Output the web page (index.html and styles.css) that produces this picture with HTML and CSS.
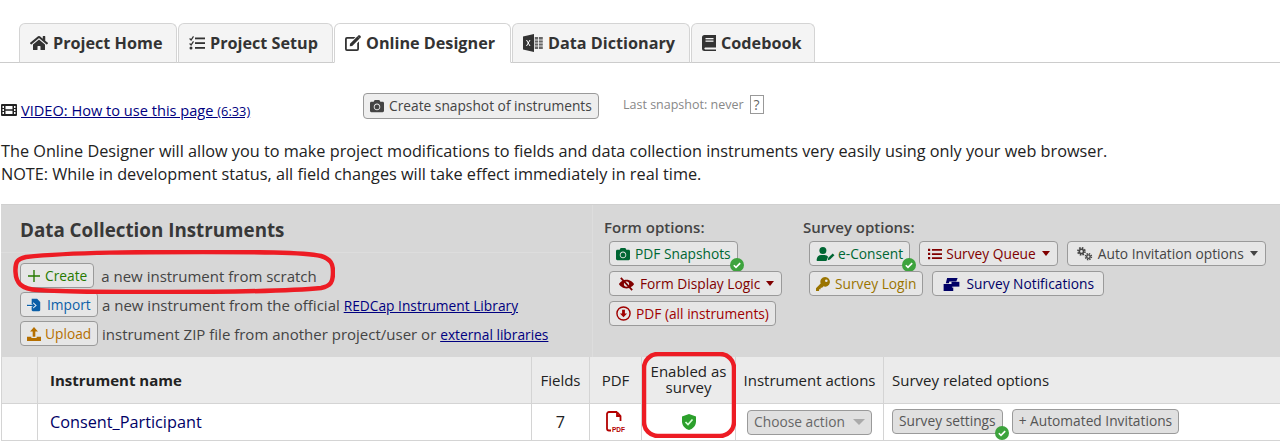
FILE: index.html
```html
<!DOCTYPE html>
<html lang="en">
<head>
<meta charset="utf-8">
<title>Online Designer</title>
<link rel="stylesheet" href="styles.css">
</head>
<body>
<nav class="tabs">
  <a class="tab t1"><svg class="ti" viewBox="0 0 576 512"><path d="M280.37 148.26L96 300.11V464a16 16 0 0 0 16 16l112.06-.29a16 16 0 0 0 15.92-16V368a16 16 0 0 1 16-16h64a16 16 0 0 1 16 16v95.64a16 16 0 0 0 16 16.05L464 480a16 16 0 0 0 16-16V300L295.67 148.26a12.19 12.19 0 0 0-15.3 0zM571.6 251.47L488 182.56V44.05a12 12 0 0 0-12-12h-56a12 12 0 0 0-12 12v72.61L318.47 43a48 48 0 0 0-61 0L4.34 251.47a12 12 0 0 0-1.6 16.9l25.5 31A12 12 0 0 0 45.15 301l235.22-193.74a12.19 12.19 0 0 1 15.3 0L530.9 301a12 12 0 0 0 16.9-1.6l25.5-31a12 12 0 0 0-1.7-16.93z"/></svg>Project Home</a>
  <a class="tab t2"><svg class="ti" viewBox="0 0 16 16"><path d="M1 3l1 1 2-3 1 .7L2.2 6 .2 4zM1 8l1 1 2-3 1 .7L2.2 11 .2 9z"/><rect x="6" y="2.500" width="10" height="1.800"/><rect x="6" y="7.200" width="10" height="1.800"/><rect x="6" y="12" width="10" height="1.800"/><circle cx="2" cy="13" r="1.500"/></svg>Project Setup</a>
  <a class="tab active t3"><svg class="ti" viewBox="0 0 16 16"><path d="M2 2h8.500L8.700 3.800H2.300a.5.5 0 0 0-.5.5V13.700a.5.5 0 0 0 .5.5H11.700a.5.5 0 0 0 .5-.5V8.300L14 6.500V14a2 2 0 0 1-2 2H2a2 2 0 0 1-2-2V4a2 2 0 0 1 2-2z"/><path d="M5 8.800L12.500 1.300 14.700 3.500 7.200 11 4.800 11.300z"/><path d="M13.200.6c.6-.6 1.300-.6 1.800 0l.5.5c.5.5.5 1.200 0 1.700l-.7.7L12.600 1.300z"/></svg>Online Designer</a>
  <a class="tab t4"><svg class="ti xl" viewBox="0 0 20 18"><path d="M0 2.500L11 0V18L0 15.500z"/><rect x="11.800" y="3" width="8" height="12" fill="#666"/><path d="M12 6h8M12 9h8M12 12h8M15.500 3v12" stroke="#fff" stroke-width=".8"/><path d="M3.500 6l3.500 6M7 6l-3.500 6" stroke="#fff" stroke-width="1"/></svg>Data Dictionary</a>
  <a class="tab t5"><svg class="ti bk" viewBox="0 0 14 16"><path d="M2.500 0H14V12.500H3A1.200 1.200 0 0 0 3 14.500H14V16H2.500A2.500 2.500 0 0 1 0 13.500V2.500A2.500 2.500 0 0 1 2.500 0z"/><rect x="3.500" y="3" width="8" height="1.300" fill="#f3f3f3"/><rect x="3.500" y="5.500" width="8" height="1.300" fill="#f3f3f3"/></svg>Codebook</a>
</nav>

<div class="toprow">
  <a class="video"><svg class="film" viewBox="0 0 16 14"><path fill-rule="evenodd" d="M1 1h14a1 1 0 0 1 1 1v10a1 1 0 0 1-1 1H1a1 1 0 0 1-1-1V2a1 1 0 0 1 1-1zM1.500 3v2h1.500V3zM1.500 6v2h1.500V6zM1.500 9v2h1.500V9zM13 3v2h1.500V3zM13 6v2h1.500V6zM13 9v2h1.500V9zM4.500 3v3.300h7V3zM4.500 7.700V11h7V7.700z"/></svg><span class="vlink">VIDEO: How to use this page <small>(6:33)</small></span></a>
  <button class="btn snap"><svg class="ic" viewBox="0 0 512 512"><path d="M512 144v288c0 26.500-21.500 48-48 48H48c-26.500 0-48-21.500-48-48V144c0-26.500 21.500-48 48-48h88l12.300-32.900c7-18.700 24.900-31.100 44.900-31.100h125.500c20 0 37.900 12.400 44.900 31.100L376 96h88c26.500 0 48 21.500 48 48zM376 288c0-66.200-53.800-120-120-120s-120 53.800-120 120 53.800 120 120 120 120-53.800 120-120zm-32 0c0 48.500-39.500 88-88 88s-88-39.500-88-88 39.500-88 88-88 88 39.500 88 88z"/></svg>Create snapshot of instruments</button>
  <span class="last">Last snapshot: never</span>
  <span class="help">?</span>
</div>

<p class="intro">The Online Designer will allow you to make project modifications to fields and data collection instruments very easily using only your web browser.<br>NOTE: While in development status, all field changes will take effect immediately in real time.</p>

<section class="panel">
  <div class="left">
    <h2 class="ptitle">Data Collection Instruments</h2>
    <div class="lrows">
      <div class="lrow r1"><button class="btn green"><svg class="ic plus" viewBox="0 0 14 14"><path d="M6.200 0h1.600v6.200H14v1.600H7.800V14H6.200V7.800H0V6.200h6.200z"/></svg>Create</button><span>a new instrument from scratch</span></div>
      <div class="lrow"><button class="btn blue"><svg class="ic" viewBox="0 0 18 16"><path d="M6 0h7l4 4v10.500A1.500 1.500 0 0 1 15.500 16h-8A1.500 1.500 0 0 1 6 14.500z"/><path d="M1 7h7V4.500L12.500 8.500 8 12.500V10H1z" fill="#fff"/><path d="M0 7.700h7V5.500L11 8.500 7 11.500V9.300H0z"/></svg>Import</button><span>a new instrument from the official <a class="lnk">REDCap Instrument Library</a></span></div>
      <div class="lrow"><button class="btn amber"><svg class="ic" viewBox="0 0 16 16"><path d="M8 0l4.500 5H9.500v6h-3V5H3.500zM0 11h5v1.500h6V11h5v5H0z"/></svg>Upload</button><span>instrument ZIP file from another project/user or <a class="lnk">external libraries</a></span></div>
    </div>
  </div>
  <div class="right">
    <div class="optcol form">
      <h3 class="opth">Form options:</h3>
      <button class="btn dgreen"><svg class="ic" viewBox="0 0 512 512"><path d="M512 144v288c0 26.500-21.500 48-48 48H48c-26.500 0-48-21.500-48-48V144c0-26.500 21.500-48 48-48h88l12.300-32.900c7-18.700 24.900-31.100 44.900-31.100h125.500c20 0 37.900 12.400 44.900 31.100L376 96h88c26.500 0 48 21.500 48 48zM376 288c0-66.200-53.800-120-120-120s-120 53.800-120 120 53.800 120 120 120 120-53.800 120-120zm-32 0c0 48.500-39.500 88-88 88s-88-39.500-88-88 39.500-88 88-88 88 39.500 88 88z"/></svg>PDF Snapshots<svg class="badge" viewBox="0 0 14 14"><circle cx="7" cy="7" r="7"/><path d="M3.800 7.200l2.200 2.200 4.200-4.300" fill="none" stroke="#fff" stroke-width="1.600"/></svg></button>
      <button class="btn maroon"><svg class="ic wide" viewBox="0 0 18 16"><path d="M9 3C4.500 3 1.500 6 .3 8c1.200 2 4.200 5 8.700 5s7.500-3 8.700-5C16.500 6 13.500 3 9 3zm0 8a3 3 0 1 1 0-6 3 3 0 0 1 0 6z" fill-rule="evenodd"/><path d="M2.500 1l13 14" stroke="currentColor" stroke-width="2"/></svg>Form Display Logic<i class="caret"></i></button>
      <button class="btn red"><svg class="ic circ" viewBox="0 0 16 16"><circle cx="8" cy="8" r="7" fill="none" stroke="currentColor" stroke-width="1.500"/><path d="M6.500 4h3v4h2.300L8 12 4.200 8h2.300z"/></svg>PDF (all instruments)</button>
    </div>
    <div class="optcol survey">
      <h3 class="opth">Survey options:</h3>
      <div class="optrow">
        <button class="btn dgreen"><svg class="ic cons" viewBox="0 0 20 16"><circle cx="7" cy="4" r="4"/><path d="M0 16v-2a5 5 0 0 1 5-5h4a5 5 0 0 1 4 2l-2 5z"/><path d="M12.500 15l.7-2.700 5-5 2 2-5 5z"/></svg>e-Consent<svg class="badge" viewBox="0 0 14 14"><circle cx="7" cy="7" r="7"/><path d="M3.800 7.200l2.200 2.200 4.200-4.300" fill="none" stroke="#fff" stroke-width="1.600"/></svg></button>
        <button class="btn maroon"><svg class="ic list" viewBox="0 0 16 14"><path d="M0 1h2.500v2.500H0zM0 5.700h2.500v2.500H0zM0 10.500h2.500V13H0zM4.500 1.300H16v2H4.500zM4.500 6H16v2H4.500zM4.500 10.800H16v2H4.500z"/></svg>Survey Queue<i class="caret"></i></button>
        <button class="btn grey"><svg class="ic wide" viewBox="0 0 18 16"><g fill="none" stroke="currentColor"><circle cx="5.500" cy="5" r="4" stroke-width="2" stroke-dasharray="1.800 1.340"/><circle cx="5.500" cy="5" r="2.400" stroke-width="1.800"/><circle cx="13.500" cy="11" r="3.400" stroke-width="1.800" stroke-dasharray="1.600 1.070"/><circle cx="13.500" cy="11" r="2" stroke-width="1.600"/></g></svg>Auto Invitation options<i class="caret"></i></button>
      </div>
      <div class="optrow">
        <button class="btn gold"><svg class="ic" viewBox="0 0 16 16"><path fill-rule="evenodd" d="M10.500 0a5.500 5.500 0 1 1-1.900 10.700L7 12.300H5.300V14H3.500v2H0v-3.200l5.300-5.400A5.500 5.500 0 0 1 10.500 0zm1.300 2.800a1.500 1.500 0 1 0 0 3 1.500 1.500 0 0 0 0-3z"/></svg>Survey Login</button>
        <button class="btn navy notif"><svg class="ic bell" viewBox="0 0 18 16"><path d="M4 1h12l-1.500 4H6.500L6 7H2.500z"/><path d="M9 5.500h9V11H9z"/><path d="M0 8h11v2.500H9.500v1.500H11V16H0z"/></svg>Survey Notifications</button>
      </div>
    </div>
  </div>
</section>

<table class="grid">
  <colgroup><col class="c1"><col class="c2"><col class="c3"><col class="c4"><col class="c5"><col class="c6"><col class="c7"></colgroup>
  <thead>
    <tr><th></th><th class="name">Instrument name</th><th class="ctr">Fields</th><th class="ctr">PDF</th><th class="ctr en">Enabled as survey</th><th class="ctr">Instrument actions</th><th>Survey related options</th></tr>
  </thead>
  <tbody>
    <tr>
      <td></td>
      <td><a class="inst">Consent_Participant</a></td>
      <td class="ctr">7</td>
      <td class="ctr"><svg class="pdf" viewBox="0 0 19 21"><path d="M11 1H3A2 2 0 0 0 1 3V17.500A2 2 0 0 0 3 19.500H5M11 1L14.500 5V10M11 1V5H14.500" fill="none" stroke="#b30000" stroke-width="1.800"/><text x="6" y="20.500" class="pdft">PDF</text></svg></td>
      <td class="ctr"><svg class="shield" viewBox="0 0 14 16"><path d="M7 0l7 2.500v5C14 12 10.500 15 7 16 3.500 15 0 12 0 7.500v-5z" fill="#2ca02c"/><path d="M3.500 8l2.500 2.500 4.500-5" fill="none" stroke="#d8ffd8" stroke-width="1.700"/></svg></td>
      <td class="ctr"><button class="btn choose">Choose action<i class="tri"></i></button></td>
      <td><div class="opts"><button class="btn greyt">Survey settings<svg class="badge" viewBox="0 0 14 14"><circle cx="7" cy="7" r="7"/><path d="M3.800 7.200l2.200 2.200 4.200-4.300" fill="none" stroke="#fff" stroke-width="1.600"/></svg></button><button class="btn greyt">+ Automated Invitations</button></div></td>
    </tr>
  </tbody>
</table>

<svg class="annot ann1" viewBox="0 0 322 44"><path d="M2.500 22C2 12 4 9 13 7 60 2 130 2 190 2c50 0 100 0 118 4 10 3 12 8 12 16 0 10-2 14-12 16-38 4-108 4-168 4-50 0-90 0-115-2C8 39 3 33 2.500 22z"/></svg>
<svg class="annot ann2" viewBox="0 0 94 86"><rect x="2" y="2" width="90" height="82" rx="14"/></svg>
</body>
</html>
```
FILE: styles.css
```css
* { box-sizing: border-box; }
html, body { margin: 0; padding: 0; }
body {
  position: relative;
  height: 445px;
  overflow: hidden;
  background: #fff;
  font-family: "Open Sans", sans-serif;
  font-size: 15px;
  color: #333;
}
.tabs {
  display: flex;
  gap: 1px;
  height: 63px;
  padding: 23px 0 0 19px;
  border-bottom: 1px solid #ccc;
}
.tab {
  display: flex;
  align-items: center;
  height: 40px;
  margin-bottom: -1px;
  padding-left: 10px;
  background: #f4f4f4;
  border: 1px solid #d4d4d4;
  border-bottom: 1px solid #ccc;
  border-radius: 6px 6px 0 0;
  font-size: 16.200px;
  font-weight: 700;
  color: #333;
  white-space: nowrap;
}
.tab.active { background: #fff; border-bottom-color: #fff; }
.t1 { width: 158px; }
.t2 { width: 155px; }
.t3 { width: 177px; }
.t4 { width: 178px; }
.t5 { width: 124px; }
.ti { width: 16px; height: 16px; margin-right: 5px; fill: #333; flex: none; }
.t1 .ti { width: 18px; }
.ti.xl { width: 20px; height: 18px; }
.ti.bk { width: 14px; }
.toprow {
  display: flex;
  align-items: flex-start;
  height: 76px;
  padding: 30px 0 0 1px;
}
.video {
  display: flex;
  align-items: center;
  width: 362px;
  height: 34px;
  color: #000080;
}
.film { width: 16px; height: 14px; margin: 0 4px 0 0; fill: #222; flex: none; }
.vlink { text-decoration: underline; font-size: 14.600px; }
.vlink small { font-size: 12.800px; }
.btn {
  position: relative;
  display: inline-flex;
  align-items: center;
  height: 25px;
  padding: 0 6px;
  background: #e6e6e6;
  border: 1px solid #9a9a9a;
  border-radius: 4px;
  font-family: inherit;
  font-size: 13.750px;
  line-height: 1;
  color: #444;
  white-space: nowrap;
}
.snap { width: 236px; height: 26px; background: #eee; flex: none; }
.ic { width: 14px; height: 14px; margin-right: 5px; fill: currentColor; flex: none; }
.ic.wide { width: 17px; margin-left: 2px; }
.ic.plus { width: 12px; height: 12px; margin-left: 1px; }
.ic.circ { width: 15px; height: 15px; }
.ic.cons { width: 19px; margin-right: 3px; }
.ic.list { margin-left: 2px; margin-right: 4px; }
.ic.bell { width: 17px; margin-left: 4px; margin-right: 6px; }
.notif { padding-right: 9px; }
.last { margin: 3px 0 0 24px; font-size: 12.500px; line-height: 18px; color: #888; }
.help {
  display: block;
  margin: 2px 0 0 6px;
  width: 14px;
  height: 19px;
  border: 1px solid #999;
  font-size: 14px;
  line-height: 17px;
  text-align: center;
  color: #666;
}
.intro {
  margin: 0 0 18px;
  height: 47px;
  padding: 1px 0 0 1px;
  font-size: 16.250px;
  line-height: 23px;
  color: #222;
  white-space: nowrap;
}
.panel {
  display: flex;
  height: 153px;
  margin-left: 1px;
  background: #d7d7d7;
  border-top: 1px solid #d0d0d0;
}
.left {
  width: 592px;
  flex: none;
  border-right: 1px solid #ddd;
}
.ptitle {
  margin: 0;
  height: 48px;
  padding: 11px 0 0 19px;
  font-size: 18.800px;
  line-height: 28px;
  font-weight: 700;
  color: #383838;
  border-bottom: 1px solid #ddd;
}
.lrows { padding: 10px 0 0 19px; display: flex; flex-direction: column; gap: 4px; }
.lrow { display: flex; align-items: center; gap: 4px; height: 25px; font-size: 15px; color: #444; }
.lrow.r1 { gap: 7px; }
.lnk { color: #000080; text-decoration: underline; font-size: 13.750px; }
.green { color: #277a00; }
.blue { color: #0b5fa8; }
.amber { color: #b56f00; }
.dgreen { color: #006633; }
.maroon { color: #800000; }
.red { color: #a00000; }
.grey { color: #444; }
.gold { color: #9a7400; }
.navy { color: #000066; }
.blue, .amber { padding: 0 6px; width: 78px; }
.blue .ic { margin-right: 6px; }
.amber .ic { margin-right: 4px; }
.right {
  display: flex;
  padding: 13px 0 0 11px;
}
.optcol { display: flex; flex-direction: column; align-items: flex-start; gap: 5px; }
.form { width: 199px; }
.form .btn { margin-left: 5px; }
.optrow { margin-left: 6px; display: flex; gap: 9px; }
.opth { margin: 0 0 -1px; height: 19px; font-size: 15px; line-height: 19px; font-weight: 600; color: #444; }
.caret {
  width: 0;
  height: 0;
  margin: 0 1px 0 6px;
  border: 4px solid transparent;
  border-top: 5px solid currentColor;
  border-bottom: 0;
}
.badge {
  position: absolute;
  right: -7px;
  bottom: -7px;
  width: 14px;
  height: 14px;
  fill: #3da33d;
}
.grid {
  width: 1279px;
  margin-left: 1px;
  border-collapse: collapse;
  table-layout: fixed;
  font-size: 15px;
  color: #222;
}
.c1 { width: 36px; }
.c2 { width: 494px; }
.c3 { width: 58px; }
.c4 { width: 52px; }
.c5 { width: 94px; }
.c6 { width: 148px; }
.grid th {
  height: 46px;
  padding: 0 8px;
  background: #ebebeb;
  border: 1px solid #d4d4d4;
  border-top: 0;
  border-right: 0;
  font-weight: 400;
  line-height: 16px;
  text-align: left;
}
.grid th.name { font-weight: 700; padding-left: 12px; }
.grid th.ctr { text-align: center; padding: 0 1px; }
.grid th.en { padding-bottom: 2px; }
.grid td {
  height: 37px;
  padding: 0 8px;
  border: 1px solid #d4d4d4;
  border-top: 0;
  border-right: 0;
  font-size: 16.250px;
  vertical-align: middle;
}
.grid td.ctr { text-align: center; padding: 0; }
.grid td:nth-child(2) { padding-left: 12px; }
.inst { color: #000066; }
.pdf { display: block; width: 19px; height: 21px; margin: 0 auto; overflow: visible; }
.pdft { font-family: "Liberation Sans", sans-serif; font-size: 6.500px; font-weight: 700; fill: #b30000; }
.shield { display: block; width: 14px; height: 16px; margin: 0 auto; }
.btn.choose { color: #666; background: #e0e0e0; padding: 0 6px 2px; margin-top: 2px; }
.tri {
  width: 0;
  height: 0;
  margin-left: 8px;
  border: 6px solid transparent;
  border-top: 6px solid #aaa;
  border-bottom: 0;
}
.btn.greyt { color: #555; background: #e0e0e0; padding-bottom: 1px; }
.opts { display: flex; gap: 9px; align-items: center; }
.annot {
  position: absolute;
  fill: none;
  stroke: #ed1c24;
  stroke-width: 4.500;
  pointer-events: none;
}
.ann1 { left: 13px; top: 250px; width: 322px; height: 44px; }
.ann2 { left: 642px; top: 352px; width: 94px; height: 86px; }
```
